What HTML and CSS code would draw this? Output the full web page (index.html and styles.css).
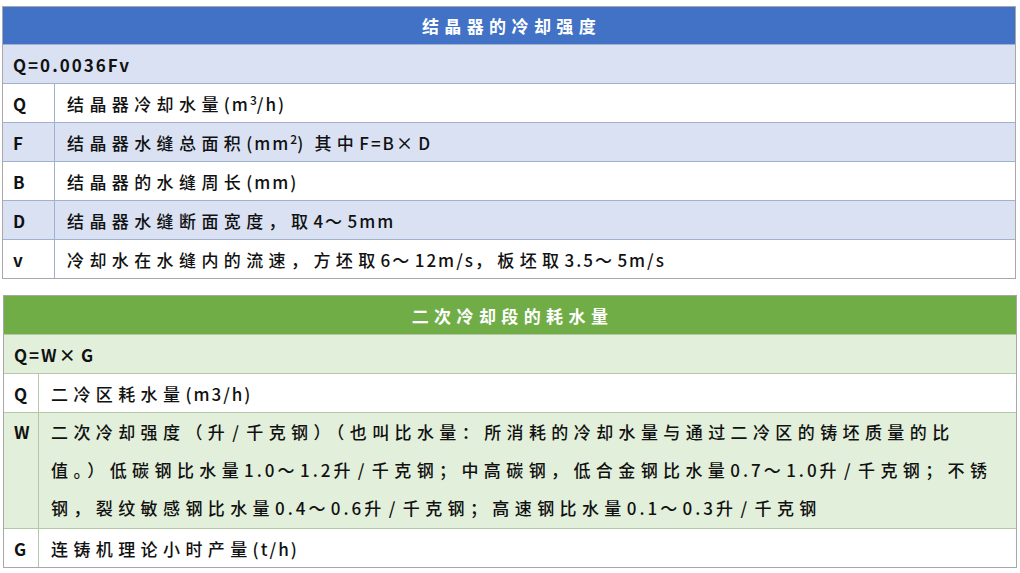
FILE: index.html
```html
<!DOCTYPE html>
<html lang="zh">
<head>
<meta charset="utf-8">
<title>结晶器的冷却强度</title>
<link rel="stylesheet" href="styles.css">
</head>
<body>
<div class="page">
  <div class="tbl tbl-blue">
    <div class="hd">结晶器的冷却强度</div>
    <div class="formula alt"><span class="lt">Q=0.0036Fv</span></div>
    <div class="lab">Q</div><div class="txt">结晶器冷却水量<span class="lt">(m<sup>3</sup>/h)</span></div>
    <div class="lab alt">F</div><div class="txt alt">结晶器水缝总面积<span class="lt">(mm<sup>2</sup>)</span>&nbsp;其中<span class="lt">F=B</span>×<span class="lt">D</span></div>
    <div class="lab">B</div><div class="txt">结晶器的水缝周长<span class="lt">(mm)</span></div>
    <div class="lab alt">D</div><div class="txt alt">结晶器水缝断面宽度，取<span class="lt">4</span>～<span class="lt">5mm</span></div>
    <div class="lab">v</div><div class="txt">冷却水在水缝内的流速，方坯取<span class="lt">6</span>～<span class="lt">12m/s</span>，板坯取<span class="lt">3.5</span>～<span class="lt">5m/s</span></div>
  </div>

  <div class="tbl tbl-green">
    <div class="hd">二次冷却段的耗水量</div>
    <div class="formula alt"><span class="lt">Q=W</span>×<span class="lt">G</span></div>
    <div class="lab">Q</div><div class="txt">二冷区耗水量<span class="lt">(m3/h)</span></div>
    <div class="lab alt lab-top">W</div><div class="txt alt multi">二次冷却强度（升<span class="sl">/</span>千克钢）（也叫比水量：所消耗的冷却水量与通过二冷区的铸坯质量的比<br>值。）低碳钢比水量<span class="lt">1.0</span>～<span class="lt">1.2</span>升<span class="sl">/</span>千克钢；中高碳钢，低合金钢比水量<span class="lt">0.7</span>～<span class="lt">1.0</span>升<span class="sl">/</span>千克钢；不锈<br>钢，裂纹敏感钢比水量<span class="lt">0.4</span>～<span class="lt">0.6</span>升<span class="sl">/</span>千克钢；高速钢比水量<span class="lt">0.1</span>～<span class="lt">0.3</span>升<span class="sl">/</span>千克钢</div>
    <div class="lab">G</div><div class="txt">连铸机理论小时产量<span class="lt">(t/h)</span></div>
  </div>
</div>
</body>
</html>
```

FILE: styles.css
```css
html, body {
  margin: 0;
  padding: 0;
  background: #ffffff;
}

.page {
  padding: 6px 4px 0 2px;
  display: flex;
  flex-direction: column;
  gap: 16px;
  font-family: "Noto Sans CJK SC", "Noto Sans", sans-serif;
  font-size: 17px;
  font-weight: 500;
  color: #111;
  letter-spacing: 5.4px;
}

.tbl {
  display: grid;
  width: 1014px;
  gap: 1px;
  border: 1px solid #a8a8a8;
  box-sizing: border-box;
}

.tbl-blue {
  grid-template-columns: 51px 1fr;
  grid-template-rows: 37px repeat(6, 38px);
  background: #9fb1cc;
}

.tbl-green {
  grid-template-columns: 34px 1fr;
  grid-template-rows: 38px 38px 38px 115px 38px;
  background: #b3c9a5;
  margin-left: 1px;
}

.tbl > div {
  display: flex;
  align-items: center;
  background: #ffffff;
  white-space: nowrap;
}

.hd {
  grid-column: 1 / 3;
  justify-content: center;
  color: #ffffff;
  font-weight: 700;
  padding-left: 5px;
}

.tbl-blue .hd { background: #4172c5 !important; }
.tbl-green .hd { background: #70ad47 !important; }

.formula {
  grid-column: 1 / 3;
  padding-left: 10px;
  font-weight: 700;
}

.lab {
  padding-left: 10px;
  font-weight: 700;
  letter-spacing: 0;
}

.tbl > .lab-top {
  align-items: flex-start;
  line-height: 38px;
}

.txt {
  padding-left: 12px;
}

.tbl-blue .alt { background: #d9e1f3; }
.tbl-green .alt { background: #e2efda; }

.multi {
  display: block !important;
  line-height: 38px;
}

.lt {
  letter-spacing: 2px;
}

.multi .lt {
  letter-spacing: 3px;
}

.sl {
  padding: 0 2px 0 2px;
}

sup {
  font-size: 12px;
  line-height: 0;
  vertical-align: 6px;
  letter-spacing: 0;
}
```
